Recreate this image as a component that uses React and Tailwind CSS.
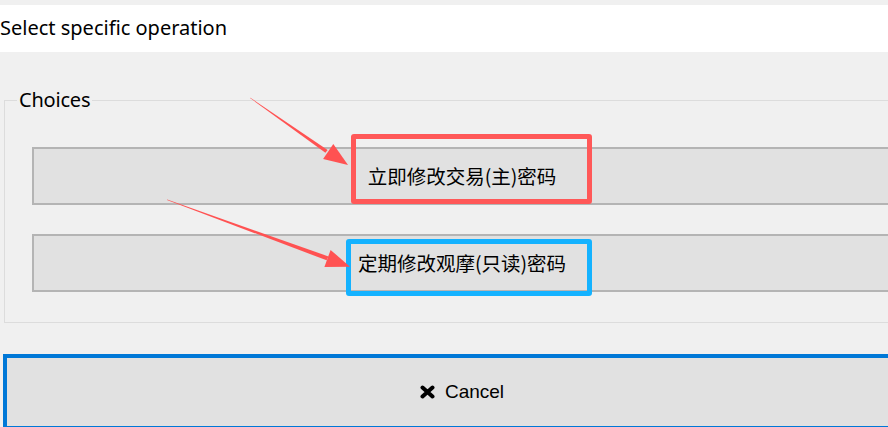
import React from 'react';

const choices = [
  { label: '立即修改交易(主)密码' },
  { label: '定期修改观摩(只读)密码' },
];

const Arrows = () => (
  <svg className="absolute left-0 top-0 pointer-events-none" width="888" height="427" viewBox="0 0 888 427">
    {/* arrow to the first button */}
    <polygon points="250,98 250.4,97.8 327.6,149.9 325.4,152.7" fill="#ff5252" />
    <polygon points="348,165 333.3,144.1 323.1,158.9" fill="#ff5252" />
    {/* arrow to the second button */}
    <polygon points="167,200 167.2,199.6 328.4,256.4 326.6,260.3" fill="#ff5252" />
    <polygon points="350,266.7 330.6,249.9 324.4,266.9" fill="#ff5252" />
  </svg>
);

const CrossIcon = () => (
  <svg width="15" height="14" viewBox="0 0 15 14">
    <path d="M2.5 2.5 L12.5 11.5 M12.5 2.5 L2.5 11.5" stroke="#000" strokeWidth="4" strokeLinecap="round" />
  </svg>
);

const App = () => {
  return (
    <div
      className="relative w-[888px] h-[427px] overflow-hidden bg-[#f0f0f0] text-black"
      style={{ fontFamily: '"Noto Sans", "Noto Sans CJK SC", sans-serif' }}
    >
      <div className="h-[5px]" />
      <div className="h-[47px] bg-white flex items-center">
        <span className="text-[20px] leading-none -mt-[2px]">Select specific operation</span>
      </div>

      {/* Choices group */}
      <fieldset className="ml-[4px] mt-[35px] w-[916px] border border-[#dcdcdc] p-0">
        <legend className="ml-[12px] px-[2px] text-[20px] leading-[26px] tracking-[-0.2px]">Choices</legend>
        <div className="flex flex-col gap-[29px] px-[27px] pt-[34px] pb-[30px]">
          {choices.map(c => (
            <button
              key={c.label}
              className="h-[58px] w-[860px] bg-[#e1e1e1] border-2 border-[#b4b4b4] flex items-center justify-center text-[19.5px]"
              style={{ fontFamily: '"Noto Sans CJK SC", sans-serif' }}
            >
              {c.label}
            </button>
          ))}
        </div>
      </fieldset>

      {/* Cancel */}
      <button className="mt-[31px] ml-[3px] w-[918px] h-[76px] bg-[#e1e1e1] border-[4px] border-[#0078d7] flex items-center justify-center gap-[10px] text-[19px]"
        style={{ fontFamily: '"Liberation Sans", sans-serif' }}
      >
        <CrossIcon />
        <span>Cancel</span>
      </button>

      {/* annotation boxes */}
      <div className="absolute left-[351px] top-[134px] w-[241px] h-[70px] border-[5px] border-[#ff5858] rounded-[3px] pointer-events-none" />
      <div className="absolute left-[346px] top-[239px] w-[246px] h-[57px] border-[5px] border-[#14b2ff] rounded-[3px] pointer-events-none" />

      <Arrows />
    </div>
  );
};

export default App;
